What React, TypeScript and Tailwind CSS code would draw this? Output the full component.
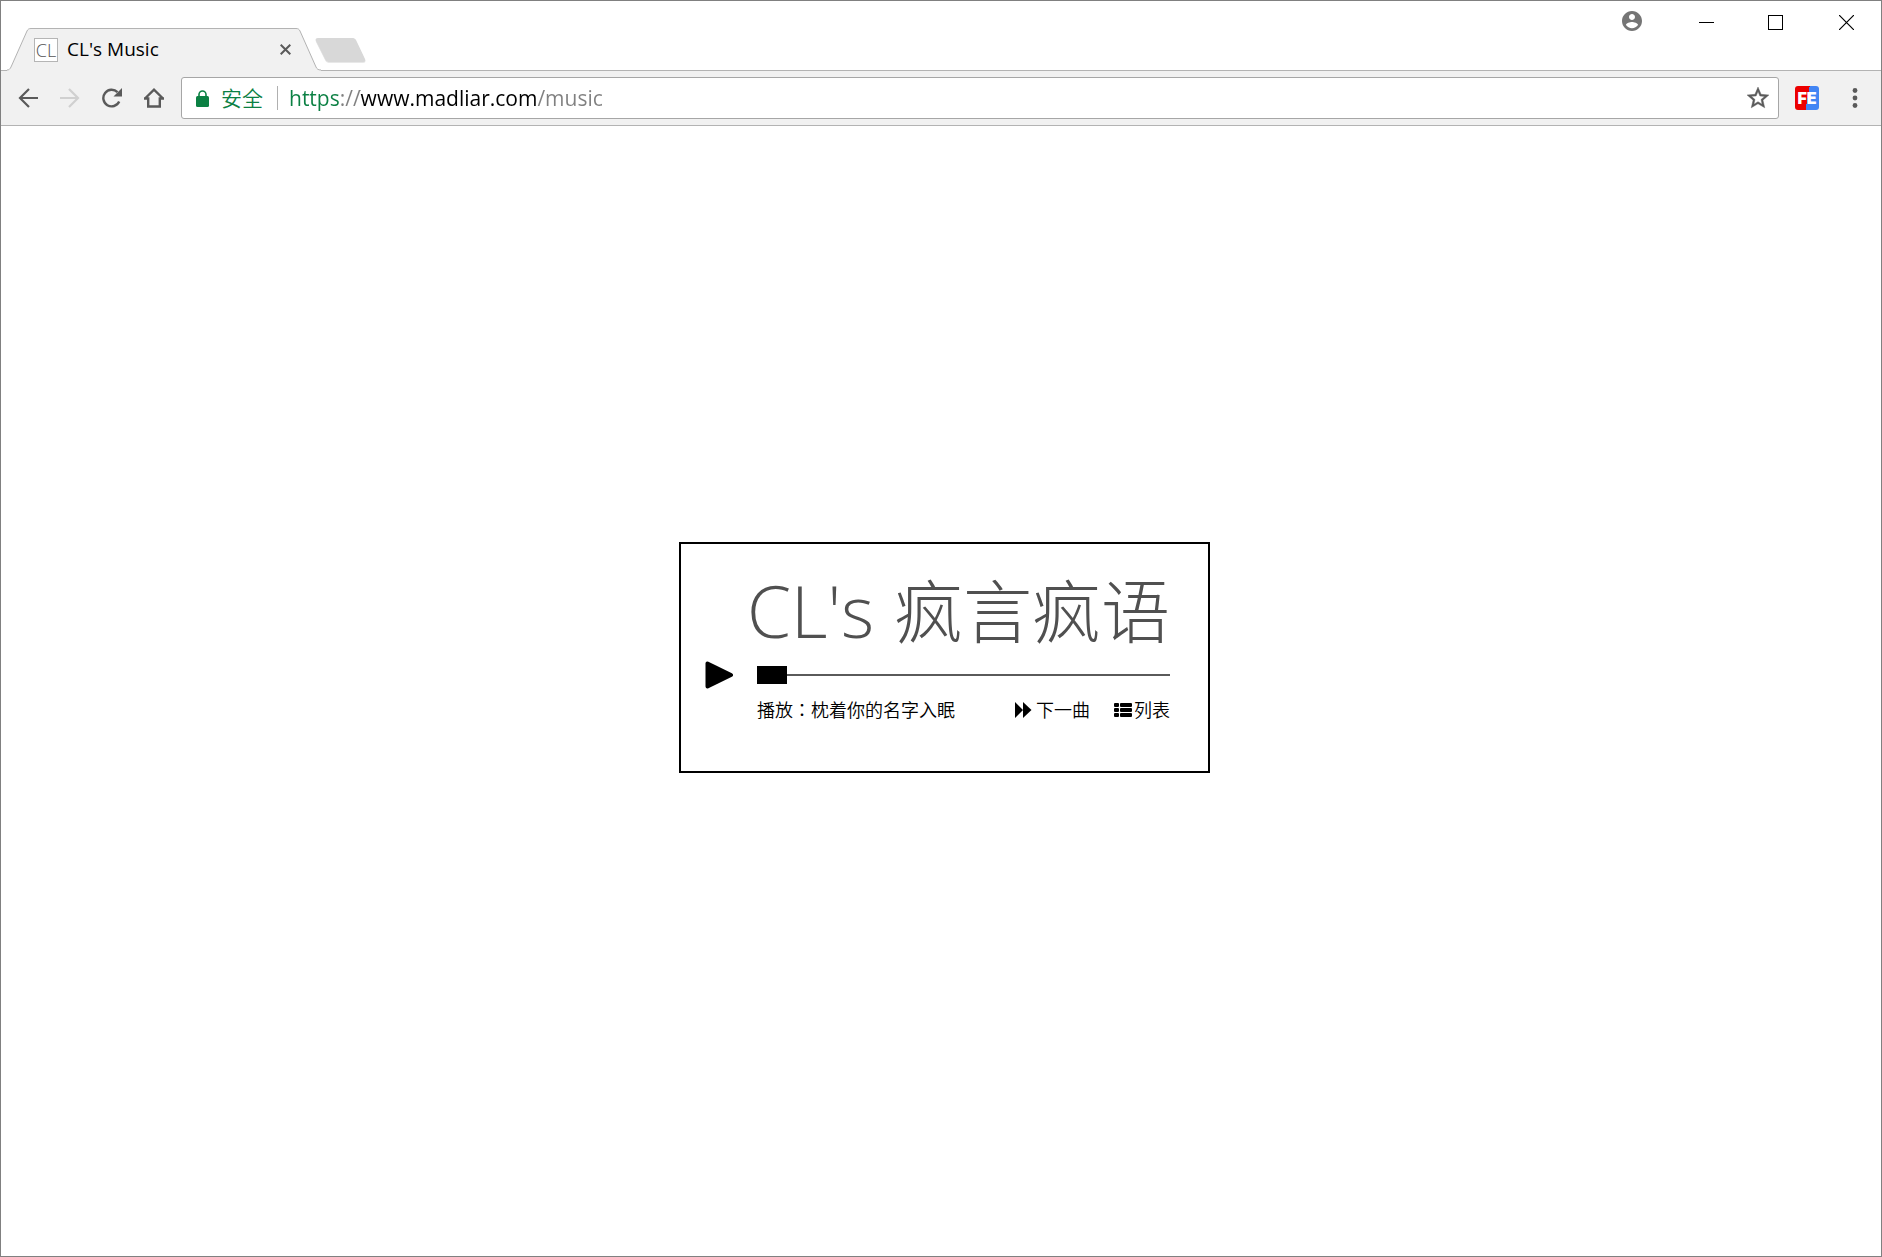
import { useState } from "react";
import type { ReactNode } from "react";

function IconButton({ label, className, children }: { label: string; className: string; children: ReactNode }) {
  return (
    <button type="button" aria-label={label} className={`flex shrink-0 items-center justify-center ${className}`}>
      {children}
    </button>
  );
}

function WindowControls() {
  return (
    <div className="flex items-start self-start">
      <IconButton label="Profile" className="mr-5 h-10 w-10 text-[#757575]">
        <svg width="20" height="20" viewBox="2 2 20 20" fill="currentColor">
          <path d="M12 2C6.480 2 2 6.480 2 12s4.480 10 10 10 10-4.480 10-10S17.520 2 12 2zm0 3c1.660 0 3 1.340 3 3s-1.340 3-3 3-3-1.340-3-3 1.340-3 3-3zm0 14.200c-2.500 0-4.710-1.280-6-3.220.030-1.990 4-3.080 6-3.080 1.990 0 5.970 1.090 6 3.080-1.290 1.940-3.500 3.220-6 3.220z" />
        </svg>
      </IconButton>
      <IconButton label="Minimize" className="h-[43px] w-[69px]">
        <svg width="15" height="15" shapeRendering="crispEdges">
          <path d="M0 7.500h15" stroke="#000" />
        </svg>
      </IconButton>
      <IconButton label="Maximize" className="h-[43px] w-[69px]">
        <svg width="15" height="15" shapeRendering="crispEdges">
          <rect x="0.500" y="0.500" width="14" height="14" fill="none" stroke="#000" />
        </svg>
      </IconButton>
      <IconButton label="Close window" className="ml-0.5 h-[43px] w-[69px]">
        <svg width="15" height="15">
          <path d="M0 0l15 15M15 0L0 15" stroke="#000" strokeWidth="1.200" />
        </svg>
      </IconButton>
    </div>
  );
}

function TabStrip() {
  return (
    <header className="flex h-[69px] items-end justify-between bg-white">
      <div className="flex items-end">
        <div className="relative z-10 ml-1.5 -mb-px flex h-[43px] w-[314px] items-center">
          <svg className="absolute inset-0" width="314" height="43" fill="none">
            <path d="M0 43V42C2 42 3 41 4 39L20 3C21 1 22 .5 24 .5H289C291 .5 292 1 293 3L309 39C310 41 311 42 314 42V43Z" fill="#f1f1f1" />
            <path d="M0 42C2 42 3 41 4 39L20 3C21 1 22 .5 24 .5H289C291 .5 292 1 293 3L309 39C310 41 311 42 314 42" stroke="#b3b3b3" />
          </svg>
          <span className="relative ml-[27px] flex h-6 w-6 items-center justify-center border border-[#b5b5b5] bg-white font-['Open_Sans'] text-lg font-light text-[#555]">
            CL
          </span>
          <span className="relative ml-[9px] flex-1 pb-0.5 text-[19px] leading-6 text-black">CL's Music</span>
          <IconButton label="Close tab" className="relative mr-[26px] h-5 w-5">
            <svg width="11" height="11">
              <path d="M.7.7l9.600 9.600M10.300.7L.7 10.300" stroke="#5a5a5a" strokeWidth="2" />
            </svg>
          </IconButton>
        </div>
        <IconButton label="New tab" className="-ml-[7px] mb-1.5 h-[27px] w-[54px]">
          <svg width="54" height="27" viewBox="0 0 54 27">
            <path d="M4 2H38C40 2 41 2.500 42 4L51 23C52 25 51 26 49 26H16C14 26 12.500 25.500 11.500 24L2 5C1 3 2 2 4 2Z" fill="#e8e8e8" />
            <path d="M4 1H38C40 1 41 1.500 42 3L51 22C52 24 51 25 49 25H16C14 25 12.500 24.500 11.500 23L2 4C1 2 2 1 4 1Z" fill="#d8d8d8" />
          </svg>
        </IconButton>
      </div>
      <WindowControls />
    </header>
  );
}

function AddressBar() {
  const [url, setUrl] = useState("https://www.madliar.com/music");
  return (
    <div className="ml-1.5 flex h-[42px] flex-1 items-center rounded-[3px] border border-[#a6a6a6] bg-white">
      <svg className="ml-3.5 shrink-0" width="13" height="17" fill="none">
        <rect x="0" y="6" width="13" height="11" rx="1.500" fill="#0b8043" />
        <path d="M3 7V4.500a3.500 3.500 0 0 1 7 0V7" stroke="#0b8043" strokeWidth="1.600" />
      </svg>
      <label htmlFor="address" className="ml-3 text-[21px] font-[350] leading-6 text-[#0b8043]">
        安全
      </label>
      <span className="ml-3.5 h-6 w-px bg-[#b0b0b0]" />
      <input
        id="address"
        type="text"
        value={url}
        spellCheck={false}
        onChange={(e) => setUrl(e.target.value)}
        className="ml-[11px] h-8 min-w-0 flex-1 bg-[linear-gradient(to_right,#0b8043_50px,#808080_50px,#808080_71px,#000_71px,#000_248px,#808080_248px)] bg-clip-text text-[21px] text-transparent caret-black outline-none"
      />
      <IconButton label="Bookmark this page" className="mr-1 h-8 w-8">
        <svg width="24" height="24" viewBox="1 1 22 22" fill="#5a5a5a" stroke="#5a5a5a" strokeWidth="0.400">
          <path d="M22 9.240l-7.190-.62L12 2 9.190 8.630 2 9.240l5.460 4.730L5.820 21 12 17.270 18.180 21l-1.630-7.030L22 9.240zM12 15.400l-3.760 2.270 1-4.280-3.320-2.880 4.380-.38L12 6.100l1.710 4.040 4.380.38-3.320 2.880 1 4.280L12 15.400z" />
        </svg>
      </IconButton>
    </div>
  );
}

function Toolbar() {
  return (
    <nav className="flex h-14 items-center border-y border-[#b3b3b3] bg-[#f1f1f1] pl-1.5">
      <IconButton label="Back" className="h-10 w-[42px]">
        <svg width="20" height="20" fill="none" stroke="#5a5a5a" strokeWidth="2.200">
          <path d="M20 10H2M11 1l-9 9 9 9" />
        </svg>
      </IconButton>
      <IconButton label="Forward" className="h-10 w-[42px]">
        <svg width="20" height="20" fill="none" stroke="#d0d0d0" strokeWidth="2.200">
          <path d="M0 10h18M9 1l9 9-9 9" />
        </svg>
      </IconButton>
      <IconButton label="Reload" className="h-10 w-[42px]">
        <svg width="22" height="20" fill="none">
          <path d="M18.200 13.500A8.300 8.300 0 1 1 16.500 4.200" stroke="#5a5a5a" strokeWidth="2.400" />
          <path d="M21 0v8.500h-8.500z" fill="#5a5a5a" />
        </svg>
      </IconButton>
      <IconButton label="Home" className="h-10 w-[42px]">
        <svg width="20" height="20" fill="none" stroke="#5a5a5a" strokeWidth="2.400">
          <path d="M1 10.500L10 1.700l9 8.800M0 10.500h4.200V18.500h11.600V10.500H20" />
        </svg>
      </IconButton>
      <AddressBar />
      <IconButton label="FE extension" className="ml-2.5 h-9 w-9">
        <span className="flex h-6 w-6 items-center justify-center rounded-[3px] bg-[linear-gradient(100deg,#ec0000_52%,#4285f4_52%)] font-['Inter'] text-base font-black text-white">
          FE
        </span>
      </IconButton>
      <IconButton label="Menu" className="mr-2 ml-3 h-9 w-9">
        <svg width="6" height="20" fill="#5a5a5a">
          <circle cx="3" cy="2.500" r="2.400" />
          <circle cx="3" cy="10" r="2.400" />
          <circle cx="3" cy="17.500" r="2.400" />
        </svg>
      </IconButton>
    </nav>
  );
}

function Player() {
  const [position, setPosition] = useState(0);
  return (
    <section className="grid w-[531px] grid-cols-[52px_1fr] border-2 border-black bg-white pt-[31px] pr-[38px] pb-[42px] pl-6">
      <h1 className="col-start-2 -ml-2.5 flex h-[84px] items-baseline justify-between whitespace-nowrap font-light text-[#505050]">
        <span className="text-[71px] leading-none">CL's</span>
        <span className="text-[69px] leading-none">疯言疯语</span>
      </h1>
      <button type="button" aria-label="播放" className="flex h-8 w-7 items-center">
        <svg width="28" height="28">
          <path d="M2.500 2.500v23L26 14z" fill="#000" stroke="#000" strokeWidth="4" strokeLinejoin="round" />
        </svg>
      </button>
      <input
        type="range"
        min={0}
        max={100}
        value={position}
        aria-label="播放进度"
        onChange={(e) => setPosition(Number(e.target.value))}
        className="h-8 w-full appearance-none bg-transparent [&::-webkit-slider-runnable-track]:h-0.5 [&::-webkit-slider-runnable-track]:bg-[#5a5a5a] [&::-webkit-slider-thumb]:-mt-2 [&::-webkit-slider-thumb]:h-[18px] [&::-webkit-slider-thumb]:w-[30px] [&::-webkit-slider-thumb]:appearance-none [&::-webkit-slider-thumb]:bg-black"
      />
      <div className="col-start-2 flex h-[38px] items-center text-lg font-[350] text-black">
        <p className="flex-1">
          播放<span className="font-['Noto_Sans_CJK_TC',sans-serif] leading-none">：</span>枕着你的名字入眠
        </p>
        <button type="button" className="flex items-center gap-1">
          <svg width="17" height="16">
            <path d="M0 0l8 8-8 8zM8 0l8.500 8L8 16z" />
          </svg>
          下一曲
        </button>
        <button type="button" className="ml-6 flex items-center gap-0.5">
          <svg width="18" height="14">
            <path d="M1 0h3q1 0 1 1v2q0 1-1 1H1Q0 4 0 3V1Q0 0 1 0zM7 0h10q1 0 1 1v2q0 1-1 1H7Q6 4 6 3V1Q6 0 7 0zM1 5h3q1 0 1 1v2q0 1-1 1H1Q0 9 0 8V6Q0 5 1 5zM7 5h10q1 0 1 1v2q0 1-1 1H7Q6 9 6 8V6Q6 5 7 5zM1 10h3q1 0 1 1v2q0 1-1 1H1q-1 0-1-1v-2q0-1 1-1zM7 10h10q1 0 1 1v2q0 1-1 1H7q-1 0-1-1v-2q0-1 1-1z" />
          </svg>
          列表
        </button>
      </div>
    </section>
  );
}

export default function App() {
  return (
    <div className="flex min-h-screen flex-col border border-[#808080] bg-white font-['Open_Sans','Noto_Sans_CJK_SC',sans-serif]">
      <TabStrip />
      <Toolbar />
      <main className="flex flex-1 items-center justify-center pb-[67px] pl-[7px]">
        <Player />
      </main>
    </div>
  );
}
